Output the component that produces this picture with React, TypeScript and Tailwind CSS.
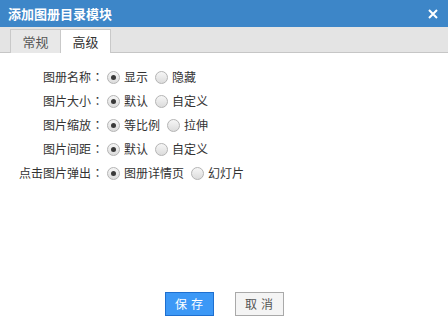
import { useState } from "react";

const ROWS = [
  { label: "图册名称", options: ["显示", "隐藏"] },
  { label: "图片大小", options: ["默认", "自定义"] },
  { label: "图片缩放", options: ["等比例", "拉伸"] },
  { label: "图片间距", options: ["默认", "自定义"] },
  { label: "点击图片弹出", options: ["图册详情页", "幻灯片"] },
];

function Radio({ checked }: { checked: boolean }) {
  return (
    <span className="flex h-[13px] w-[13px] items-center justify-center rounded-full border border-[#b4b4b4] bg-gradient-to-b from-[#f6f6f6] to-[#dcdcdc]">
      {checked && <span className="h-[5px] w-[5px] rounded-full bg-[#3a3a3a]" />}
    </span>
  );
}

export default function App() {
  const [tab, setTab] = useState(1);
  const [values, setValues] = useState<number[]>([0, 0, 0, 0, 0]);

  return (
    <div className="flex h-[330px] w-[448px] flex-col bg-white font-['Noto_Sans_CJK_SC',sans-serif] text-[12px] text-[#333]">
      <div className="flex h-[27px] items-center justify-between bg-[#3d86c8] pl-[8px] pr-[10px]">
        <span className="text-[13px] font-bold text-white">添加图册目录模块</span>
        <svg width="10" height="10" viewBox="0 0 10 10" className="text-white">
          <path d="M1 1L9 9M9 1L1 9" stroke="currentColor" strokeWidth="2" />
        </svg>
      </div>

      <div className="flex h-[26px] items-end border-b border-[#c6c6c6] bg-[#e4e4e4] pl-[10px]">
        {["常规", "高级"].map((t, i) => (
          <button
            key={t}
            onClick={() => setTab(i)}
            className={`-mb-px flex h-[24px] w-[51px] items-center justify-center border border-b-0 border-[#c9c9c9] text-[13px] ${
              i > 0 ? "-ml-px" : ""
            } ${tab === i ? "bg-white text-[#333]" : "bg-[#e8e8e8] text-[#555]"}`}
          >
            {t}
          </button>
        ))}
      </div>

      <div className="flex flex-1 flex-col pt-[12px]">
        {ROWS.map((row, r) => (
          <div key={row.label} className="flex h-[24px] items-center">
            <span className="flex w-[107px] justify-end pr-[3px]">
              {row.label}
              <span className="w-[13px] text-center font-['Noto_Sans_CJK_JP',sans-serif]">：</span>
            </span>
            {row.options.map((opt, o) => (
              <label
                key={opt}
                onClick={() => setValues((v) => v.map((x, k) => (k === r ? o : x)))}
                className="mr-[7px] flex cursor-pointer items-center gap-[4px]"
              >
                <Radio checked={values[r] === o} />
                <span>{opt}</span>
              </label>
            ))}
          </div>
        ))}
      </div>

      <div className="flex justify-center gap-[21px] pb-[14px]">
        <button className="flex h-[24px] w-[49px] items-center justify-center border border-[#1e6fcf] bg-[#3c98f6] tracking-[4px] text-white">
          <span className="pl-[4px]">保存</span>
        </button>
        <button className="flex h-[24px] w-[49px] items-center justify-center border border-[#a9a9a9] bg-[#f4f4f4] tracking-[4px] text-[#555]">
          <span className="pl-[4px]">取消</span>
        </button>
      </div>
    </div>
  );
}
